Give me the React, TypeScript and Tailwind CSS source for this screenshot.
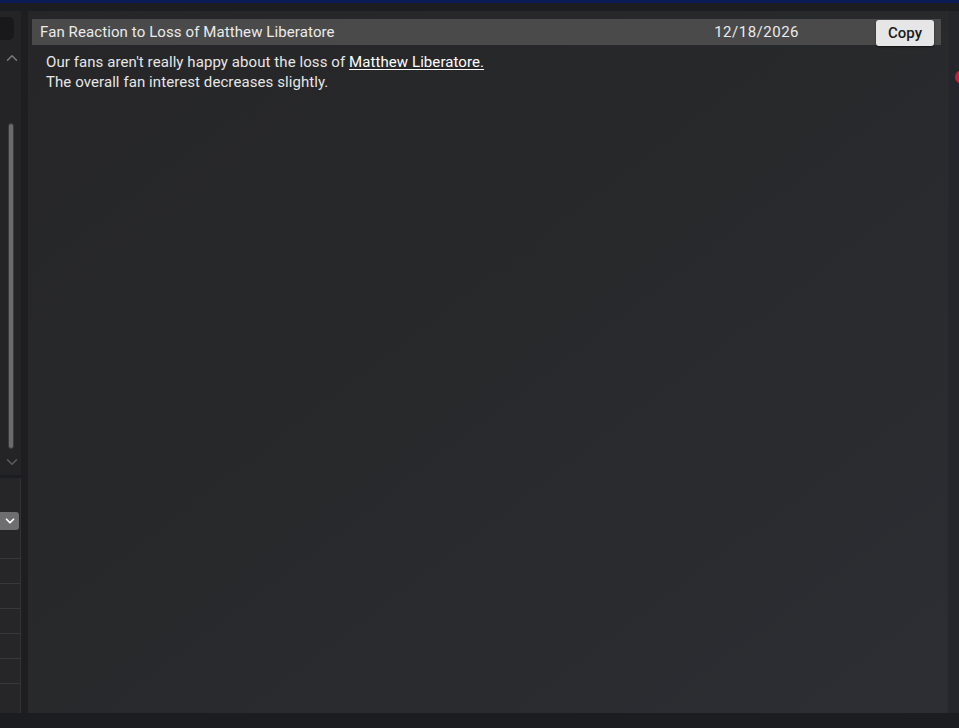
import { ChevronDown, ChevronUp } from "lucide-react";

function LeftRail() {
  return (
    <div className="flex w-[21px] shrink-0 flex-col gap-[3px]">
      <div className="relative flex h-[464px] flex-col items-end bg-[#242426]">
        <div className="absolute left-0 top-[6px] h-[23px] w-[14px] rounded-r-[5px] bg-[#19191b]" />
        <ChevronUp className="absolute left-[3px] top-[38px] h-[18px] w-[18px] text-[#7a7a7d]" strokeWidth={2} />
        <div className="absolute left-[8px] top-[112px] h-[326px] w-[6px] rounded-full border border-[#3a3a3c] bg-[#6b6a6d]" />
        <ChevronDown className="absolute left-[3px] top-[442px] h-[18px] w-[18px] text-[#5d5d60]" strokeWidth={2} />
      </div>
      <div className="flex flex-1 flex-col border-r border-[#333335] bg-[#262628]">
        <div className="h-[34px]" />
        <div className="flex h-[18px] w-[19px] items-center justify-center rounded-r-[3px] bg-[#6e6d70]">
          <ChevronDown className="h-[14px] w-[14px] text-white" strokeWidth={3} />
        </div>
        <div className="h-[28px]" />
        {[0, 1, 2, 3, 4, 5].map((i) => (
          <div key={i} className="h-[25px] border-t border-[#38383a]" />
        ))}
      </div>
    </div>
  );
}

export default function App() {
  return (
    <div
      className="relative flex h-[728px] w-[959px] flex-col overflow-hidden bg-[#1c1d20]"
      style={{ fontFamily: "Roboto, 'Liberation Sans', sans-serif" }}
    >
      <div className="h-[3px] bg-[#0b1b55]" />
      <div className="flex flex-1 pb-[15px] pt-[8px]">
        <LeftRail />
        <div className="w-[7px] shrink-0 bg-[#1e1e20]" />
        <div className="flex w-[919px] shrink-0 flex-col bg-linear-to-br from-[#262628] via-[#28292b] to-[#2c2e34] pl-1 pr-[6px] pt-2">
          <div className="flex h-[26px] items-center bg-[#4a4a4a] pl-2 text-[15px] tracking-[0.1px] text-[#ebebeb]">
            <span>Fan Reaction to Loss of Matthew Liberatore</span>
            <span className="ml-auto tracking-[0.5px]">12/18/2026</span>
            <button className="ml-[77px] mr-[7px] mt-[2px] h-[26px] w-[58px] rounded-[3px] bg-[#e6e6e6] text-[15px] font-medium tracking-normal text-[#1a1a1a] shadow-[0_1px_2px_rgba(0,0,0,0.5)]">
              Copy
            </button>
          </div>
          <div className="mt-[7px] pl-[14px] text-[15px] leading-[20px] tracking-[0.08px] text-[#e6e6e6]">
            <p>
              Our fans aren't really happy about the loss of{" "}
              <span className="text-white underline underline-offset-2">Matthew Liberatore.</span>
            </p>
            <p>The overall fan interest decreases slightly.</p>
          </div>
        </div>
        <div className="relative flex-1 border-l border-[#2a2c31] bg-[#24262b]">
          <div className="absolute left-[7px] top-[59px] h-[14px] w-[14px] rounded-full bg-[#c3203c]" />
        </div>
      </div>
    </div>
  );
}
